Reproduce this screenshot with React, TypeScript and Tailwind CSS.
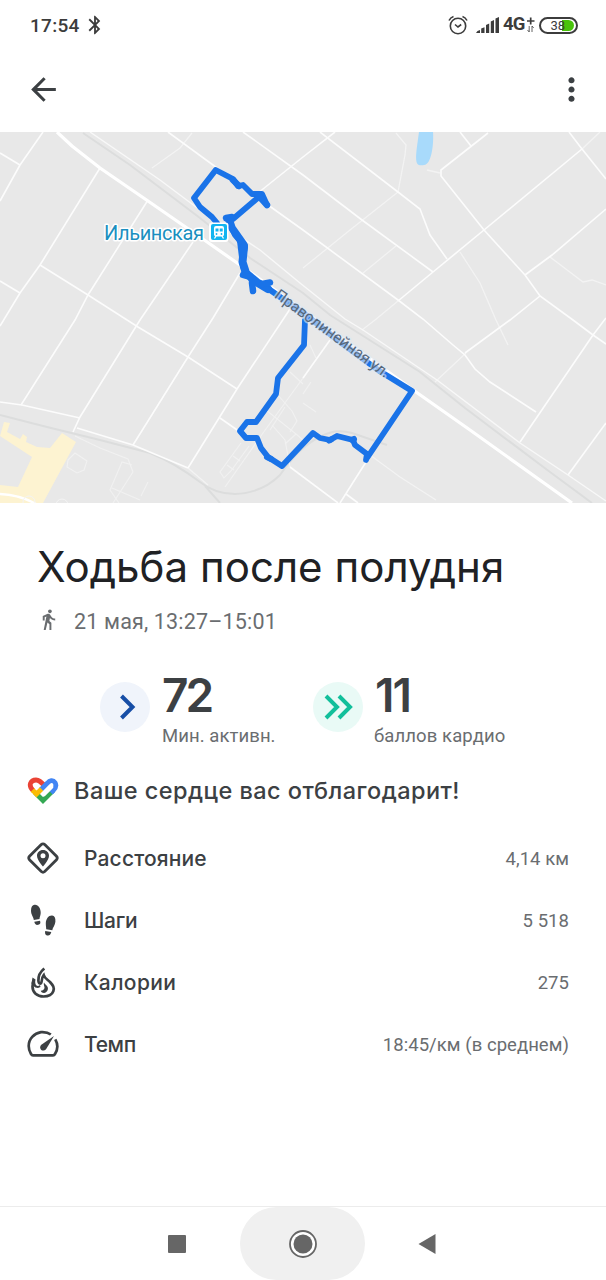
import React from 'react';
import { MdArrowBack, MdBluetooth, MdDirectionsWalk, MdMoreVert } from 'react-icons/md';

// Streets of the map, grouped by the width they are drawn with
const streets = [
  'M168 132L213 165L268 205L303 230L398 300L423 319L453 345L465 355L475 369L490 382L536 412',
  'M243 132L303 175L362 220L433 272',
  'M320 132L398 192L420 209L430 235L447 259',
  'M258 193L303 157L335 132',
  'M398 301L433 272L484 230L582 149',
  'M488 133L441 170L441 176L484 230L525 275L540 296L573 320L593 335L606 344',
  'M460 132L471 146',
  'M569 132L582 149L606 179',
  'M606 209L552 255L525 275',
  'M540 296L510 320L465 353',
  'M606 318L593 335L520 442',
  'M606 423L568 475',
  'M43 132L20 165L0 201',
  'M0 153L20 165',
  'M100 168L40 265L20 293L0 326',
  'M0 281L20 293',
  'M148 200L88 295L75 320L21 405',
  'M40 265L88 295L138 327L188 357L237 389',
  'M193 242L140 320L80 417L73 432',
  'M240 273L213 318L188 357L133 445',
  'M290 309L237 389L188 468',
  'M0 402L22 405L80 418',
  'M77 428L133 445L188 468',
  'M220 418L240 432',
  'M290 467L338 503',
  'M366 462L340 503',
  'M346 494L358 503',
  'M330 340L303 378',
];

const lanes = [
  'M192 133L180 148L152 168',
  'M398 192L350 230L303 268',
  'M396 246L363 273',
  'M396 133L406 145L405 155L398 192',
  'M427 170L440 173',
  'M398 301L375 320L362 330',
  'M582 149L600 132',
  'M460 252L480 283L496 320L508 345',
  'M550 257L583 282L592 280L606 285',
  'M466 353L435 382',
  'M370 455L400 477L436 500',
  'M188 468L208 485',
];

const paths = [
  'M306 374L263 433L225 487',
  'M266 410L296 434L303 440',
  'M277 394L284 402L292 411L297 421L290 432',
  'M290 372L303 384',
  'M272 425L285 440L290 467',
  'M296 434L285 444',
  'M241 443L220 472L224 478L231 471L249 446',
  'M233 456L240 461M227 465L234 470',
  'M311 382L303 394M303 403L316 412',
  'M310 345L316 358M285 407L270 430',
  'M75 436L100 448L128 459L133 472L113 503',
  'M132 465L122 462L110 490L119 503',
  'M112 488L140 500M148 482L141 496',
  'M68 460L75 453L87 461L84 470L77 473L67 467Z',
];

const route = [
  'M217 223L212 217L200 207L194 198L215.7 170L233 179L238 186L243 185L252 194L262 194L267 205',
  'M260 196L233 219L227 218L235 235L245 247L242 262L245 274',
  'M240 242L243 266L252 281L260 283L273 292L306 315L340 342L378 370L412 391L367 458',
  'M305 320L304 345L278 378L276 394L256 422L247 422L240 431L246 438L257 438L261 448L268 457L282 466L313 433L320 438L330 440L337 436L353 440L355 445L367 454L366 460',
];

const ActivityMap: React.FC = () => (
  <svg className="block h-[371px] w-full" viewBox="0 132 606 371" preserveAspectRatio="none">
    <rect x="0" y="132" width="606" height="371" fill="#e8e8e8" />

    {/* Yellow block in the bottom left corner */}
    <path
      d="M4 422L10 423L7 432L20 439L23 434L27 437L26 442L37 447L50 448L62 433L76 442L43 503L0 503L0 485L18 487L32 457L0 436Z"
      fill="#fdf3d1"
    />
    <path d="M0 494Q20 495 36 504" fill="none" stroke="#fff" strokeWidth="2.5" />
    <circle cx="29" cy="502" r="6" fill="none" stroke="#f4f4f4" />
    <circle cx="62" cy="505" r="6" fill="none" stroke="#f4f4f4" />

    {/* Water */}
    <path d="M419 132H433C434 145 431 165 424 165C414 167 415 160 419 132Z" fill="#a8dafb" />

    {/* Railway */}
    <g fill="none" stroke="#dcdddd" strokeWidth="2">
      <path d="M83 133L130 165L200 218L250 258L303 293L330 315L420 372L465 408L550 472L592 503" />
      <path d="M0 415L47 427L100 440L150 453Q175 463 200 482Q215 494 235 494Q262 493 280 475Q300 446 320 437Q335 428 352 433L387 445M205 486L220 503" />
    </g>

    <g fill="none" stroke="#f1f1f1" strokeWidth="1.1">
      {paths.map((d, i) => <path key={i} d={d} />)}
    </g>
    <g fill="none" stroke="#f3f3f3" strokeWidth="1.3">
      {lanes.map((d, i) => <path key={i} d={d} />)}
    </g>
    <g fill="none" stroke="#fcfcfc" strokeWidth="1.6">
      {streets.map((d, i) => <path key={i} d={d} />)}
    </g>
    <path
      d="M90 132L160 180L200 210L260 250L300 283L345 319L363 330L437 380L520 443L568 475L606 501"
      fill="none" stroke="#f8f8f8" strokeWidth="1.4"
    />
    <path d="M57 132L72 146L100 168L148 201L200 237L240 265L300 308L416 392L470 430L572 503" fill="none" stroke="#fff" strokeWidth="3.2" />

    {/* Walked route */}
    <g fill="none" stroke="#1a73e8" strokeWidth="5.8" strokeLinecap="round" strokeLinejoin="round">
      {route.map((d, i) => <path key={i} d={d} />)}
      <path d="M229 219L232 228L244 245" strokeWidth="7.5" />
      <path d="M244 247L242.500 262L246 273L258 283L268 289" strokeWidth="8" />
      <path d="M252 283L253 291M262 284L270 282.500M226 218L232 217M233 180L239 186M258 195L267 205M243 275L250 277" strokeWidth="6.500" />
      <path d="M267 457L271 459M329 440.500L331 439.500M352 440L354 439" strokeWidth="6" />
    </g>

    {/* Labels */}
    <g fontFamily="Roboto, sans-serif">
      <text
        x="104" y="240" fontSize="20" textLength="100" fill="#1a8fc0"
        stroke="#fff" strokeWidth="3" strokeLinejoin="round" paintOrder="stroke"
      >
        Ильинская
      </text>
      <path id="street-label" d="M273.5 297L386 379" fill="none" />
      <text
        fontSize="15.500" fill="#56677a" stroke="#dfe8f3" strokeOpacity="0.6"
        strokeWidth="3.5" strokeLinejoin="round" paintOrder="stroke"
      >
        <textPath href="#street-label" textLength="138">Праволинейная ул.</textPath>
      </text>
    </g>

    {/* Train station */}
    <rect x="209" y="222.500" width="19.500" height="19.500" rx="3" fill="#fff" />
    <rect x="211" y="224" width="16" height="16" rx="2" fill="#12b5f0" />
    <rect x="214" y="226" width="10" height="10.500" rx="2" fill="#fff" />
    <path d="M215.500 228.500h3v3h-3zM219.700 228.500h3v3h-3z" fill="#12b5f0" />
    <circle cx="216.500" cy="234" r="0.900" fill="#12b5f0" />
    <circle cx="221.500" cy="234" r="0.900" fill="#12b5f0" />
    <path d="M216 236L214.500 238.500M222 236L223.500 238.500" stroke="#fff" strokeWidth="1.300" />
  </svg>
);

const StatusBar: React.FC = () => (
  <div className="flex h-[50px] items-center justify-between pl-[30px] pr-[27px] text-[#3c3c3c]">
    <div className="flex items-center">
      <span className="mt-0.5 w-[50px] text-[19px] font-medium tracking-[0.3px]">17:54</span>
      <MdBluetooth className="ml-1 h-[22px] w-[22px]" />
    </div>
    <div className="flex items-center">
      <svg width="20" height="20" viewBox="0 0 20 20" fill="none" stroke="#3c3c3c" strokeWidth="1.600">
        <circle cx="10" cy="11" r="7.700" />
        <path d="M7 9.500L10 12L13.200 9.500M1 5.500Q2.500 2.500 5.500 1.500M14.500 1.500Q17.500 2.500 19 5.500" />
      </svg>
      <svg className="ml-[8px]" width="23" height="18" viewBox="0 0 23 18" fill="#3c3c3c">
        <path d="M0 17Q1 14.500 4 14V17zM5.200 12.500l3.300-1.200V17H5.200zM10 9l3.200-1.500V17H10zM14.800 5.500l3.200-1.500V17h-3.200zM19.500 2.500L23 1V17h-3.500z" />
      </svg>
      <span className="ml-[4px] w-[23px] text-[18.500px] font-bold tracking-[-0.8px]">4G</span>
      <svg width="9" height="18" viewBox="0 0 9 18" fill="none" stroke="#3c3c3c">
        <path d="M1 5H8.500M4.700 1.500V8.500" strokeWidth="1.700" />
        <path d="M3.200 10V16L1.500 14M6 16V10L7.700 12" strokeWidth="0.800" />
      </svg>
      <div className="mr-px ml-1 flex h-[17px] w-[39px] rounded-full border-2 border-[#3c3c3c] bg-[linear-gradient(#49c30b,#49c30b)] bg-[length:5px_11px] bg-[position:21px_1px] bg-no-repeat text-[13px] leading-[14px]">
        <span className="w-[25px] pl-[9.5px]">38</span>
        <span className="my-px h-[11px] w-[8px] rounded-r-full bg-[#49c30b]" />
      </div>
    </div>
  </div>
);

const HeartIcon: React.FC = () => (
  <svg width="32" height="28" viewBox="0 0 32 28" fill="none" strokeWidth="4.800">
    <path d="M8 15.500L16 23.500L26.500 13" stroke="#34a853" />
    <path d="M6.200 13.700C0.500 8 4 3 9 3C12 3 13.500 4.500 17 8" stroke="#ea4335" />
    <path d="M14 12.500L20.500 6C22.500 3.500 26 2.500 28 5.500C29.800 8.500 28.500 11.300 26.200 13.500L24 15.700" stroke="#4285f4" />
    <path d="M5.500 13L9.500 17L14.500 12" stroke="#fbbc04" />
    <path d="M17 17.500L24.500 10" stroke="#fff" strokeWidth="3.800" strokeLinecap="round" />
  </svg>
);

const DistanceIcon: React.FC = () => (
  <svg width="34" height="34" viewBox="0 0 34 34">
    <path d="M17 2.800Q18 2.800 18.700 3.500L30.500 15.300Q32 17 30.500 18.700L18.700 30.500Q17 32 15.300 30.500L3.500 18.700Q2 17 3.500 15.300L15.300 3.500Q16 2.800 17 2.800Z" fill="none" stroke="#3c4043" strokeWidth="2.800" />
    <path fillRule="evenodd" d="M17 9C13.500 9 11 11.500 11 14.700C11 19 17 25.500 17 25.500S23 19 23 14.700C23 11.500 20.500 9 17 9ZM17 12.300a2.500 2.500 0 1 1 0 5a2.500 2.500 0 0 1 0-5Z" fill="#3c4043" />
  </svg>
);

const StepsIcon: React.FC = () => (
  <svg width="34" height="34" viewBox="0 0 34 34" fill="#3c4043">
    <path d="M8.500 1.800C12 1.200 15 5.500 14.700 10C14.500 13 13.500 14.500 13.500 16L7.800 17C7.500 13.500 5 12 5 7.500C5 4 6.500 2 8.500 1.800Z" />
    <path d="M8.300 18.700L14 17.700C15 20 14 21.300 12.300 21.800C10 22.300 8.700 21 8.300 18.700Z" />
    <path d="M26.200 12.600C22.500 12.300 20 16 19.800 20C19.700 23 20.300 24.500 20.200 26.200L26.300 27.300C26.700 24.500 29 22.500 29.400 18.700C29.700 15 28.500 12.800 26.200 12.600Z" />
    <path d="M19.200 27.900L25.300 29C24.700 32 23 32.800 21.200 32.400C19.300 32 18.700 30.500 19.200 27.900Z" />
  </svg>
);

const FlameIcon: React.FC = () => (
  <svg width="34" height="34" viewBox="0 0 34 34">
    <path
      d="M18.300 3.500C14 7 12.200 10.500 12.400 15.500C12.500 19 15.300 19.500 15.500 17C15.700 14 16 12 17.700 10C18.700 13.500 21.500 14.500 24 17C27 20.300 28.700 22.500 27.300 26.300C25.800 30.300 21.500 31.500 17.500 31.500C11 31.500 6.500 27.500 6.500 21.500C6.500 18.500 7 16.500 8 15"
      fill="none" stroke="#3c4043" strokeWidth="2.700"
    />
    <path d="M5.500 18.500L6.500 12.500L9.500 14.500Q8.500 18.500 10.500 20.500Q12 21.500 14 20L14.500 22L12 23Q9 23 7.500 21Z" fill="#3c4043" />
    <path d="M18 17.500C18.500 19 20.500 19.800 21.500 21.800C22.800 24.500 21 27.500 18 28C16 27.700 15 27 14.700 25.800C17 25.700 18.500 24.500 18.500 22.500C18.300 20.500 17.300 19.300 18 17.500Z" fill="#3c4043" />
  </svg>
);

const PaceIcon: React.FC = () => (
  <svg width="34" height="34" viewBox="0 0 34 34">
    <path d="M24.800 7.500C21.500 5 18 5 15 5.200C8 6.200 2.700 12 2.700 19C2.700 22 3.500 24.500 5 27Q5.800 28.300 7 28.300H27Q28.300 28.300 29 27C31.800 22.500 32 17 29.300 12.300" fill="none" stroke="#3c4043" strokeWidth="2.700" />
    <path d="M28 9L20.500 21.500C19 24 16.500 24 15 22.700C13.500 21 14 18.800 15.700 17.500Z" fill="#3c4043" />
  </svg>
);

const stats = [
  { label: 'Расстояние', value: '4,14 км', icon: DistanceIcon, tracking: 'tracking-[0.15px]' },
  { label: 'Шаги', value: '5 518', icon: StepsIcon, tracking: 'tracking-[-0.3px]' },
  { label: 'Калории', value: '275', icon: FlameIcon, tracking: 'tracking-[0.4px]' },
  { label: 'Темп', value: '18:45/км (в среднем)', icon: PaceIcon, tracking: 'tracking-[-0.4px]' },
];

const App: React.FC = () => {
  return (
    <div className="flex h-[1280px] w-[606px] flex-col overflow-hidden bg-white font-['Roboto',sans-serif]">
      <StatusBar />

      {/* App bar */}
      <header className="flex h-[82px] items-center justify-between pb-[3px] pl-[25px] pr-[16px] text-[#3c4043]">
        <MdArrowBack className="h-[37px] w-[37px]" />
        <MdMoreVert className="h-[37px] w-[37px]" />
      </header>

      <ActivityMap />

      <main className="flex-1">
        <h1 className="mt-[37px] pl-[37px] font-['Inter',sans-serif] text-[42px] leading-[54px] tracking-[0.03px] whitespace-nowrap text-[#202124]">
          Ходьба после полудня
        </h1>
        <div className="mt-[14px] flex h-[26px] items-center pl-[37px] text-[#6a6d70]">
          <MdDirectionsWalk className="mb-[4px] h-[23px] w-[23px]" />
          <span className="mt-0.5 ml-[14px] text-[21.500px] leading-[26px] tracking-[0.17px]">21 мая, 13:27–15:01</span>
        </div>

        <div className="mt-[34px] flex h-[84px] pl-[100px]">
          <div className="flex w-[212px]">
            <div className="mt-[14px] flex size-[50px] items-center justify-center rounded-full bg-[#f0f4fb]">
              <svg width="50" height="50" viewBox="0 0 50 50" fill="none" stroke="#174ea6" strokeWidth="4">
                <path d="M21.500 14L32.500 25L21.500 36" />
              </svg>
            </div>
            <div className="ml-3">
              <p className="font-['Inter',sans-serif] text-[46px] leading-[54px] font-semibold tracking-[-3px] text-[#3c4043]">72</p>
              <p className="mt-0.5 text-[18.500px] leading-6 tracking-[0.07px] whitespace-nowrap text-[#6a6d70]">Мин. активн.</p>
            </div>
          </div>
          <div className="flex">
            <div className="mt-[14px] ml-px flex size-[50px] items-center justify-center rounded-full bg-[#e9faf6]">
              <svg width="50" height="50" viewBox="0 0 50 50" fill="none" stroke="#12bf9b" strokeWidth="4">
                <path d="M13 14L24 25L13 36M26 14L37 25L26 36" />
              </svg>
            </div>
            <div className="ml-[11px]">
              <p className="pl-px font-['Inter',sans-serif] text-[46px] leading-[54px] font-semibold tracking-[-2px] text-[#3c4043]">11</p>
              <p className="mt-0.5 text-[18.500px] leading-6 tracking-[0.1px] whitespace-nowrap text-[#6a6d70]">баллов кардио</p>
            </div>
          </div>
        </div>

        <div className="mt-[23px] flex h-8 items-center pl-[27px]">
          <HeartIcon />
          <p className="ml-[15px] font-['Inter',sans-serif] text-[23.500px] font-medium tracking-[0.45px] whitespace-nowrap text-[#3c4043]">
            Ваше сердце вас отблагодарит!
          </p>
        </div>

        <div className="mt-[20px]">
          {stats.map(({ label, value, icon: Icon, tracking }) => (
            <div key={label} className="flex h-[62px] items-center pl-[26px] pr-[37px]">
              <Icon />
              <span className={`mt-0.5 ml-6 font-['Inter',sans-serif] text-[21px] font-medium text-[#3c4043] ${tracking}`}>{label}</span>
              <span className="mt-1 ml-auto text-[18.500px] tracking-[0.05px] text-[#6a6d70]">{value}</span>
            </div>
          ))}
        </div>
      </main>

      {/* System navigation */}
      <nav className="flex h-[74px] items-center border-t border-[#ececec] pl-[168px]">
        <div className="size-[18px] rounded-[1px] bg-[#666]" />
        <div className="ml-[54px] flex h-[73px] w-[125px] items-center justify-center rounded-full bg-[#f0f0f0]">
          <svg width="28" height="28" viewBox="0 0 28 28">
            <circle cx="14" cy="14" r="13" fill="#fff" stroke="#666" strokeWidth="1.800" />
            <circle cx="14" cy="14" r="9.500" fill="#666" />
          </svg>
        </div>
        <svg className="ml-[53px]" width="18" height="20" viewBox="0 0 18 20">
          <path d="M0.500 10L17.500 0V20Z" fill="#666" />
        </svg>
      </nav>
    </div>
  );
};

export default App;
